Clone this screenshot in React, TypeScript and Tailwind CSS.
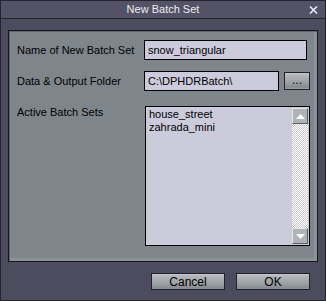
import React from "react";

const font = { fontFamily: '"Liberation Sans", Arial, sans-serif' };

function BevelButton({ children, className = "" }: { children: React.ReactNode; className?: string }) {
  return (
    <button
      className={`flex items-center justify-center border border-[#22212b] bg-[linear-gradient(#c4c8cb_0px,#b4b8bc_2px,#a6abaf_6px,#9a9fa3_10px,#868b90_14px,#9ca1a5_16px)] text-[12px] leading-none text-black ${className}`}
    >
      {children}
    </button>
  );
}

function ScrollArrow({ up }: { up: boolean }) {
  return (
    <div className="flex h-[16px] w-[16px] items-center justify-center border border-t-[#e4e6e8] border-l-[#e4e6e8] border-r-[#5a5f64] border-b-[#5a5f64] bg-[#aeb3b7]">
      <svg width="9" height="5" viewBox="0 0 9 5">
        {up ? <path d="M0 5 L4.5 0 L9 5 Z" fill="#ffffff" /> : <path d="M0 0 L4.5 5 L9 0 Z" fill="#ffffff" />}
      </svg>
    </div>
  );
}

export default function App() {
  return (
    <div className="h-[301px] w-[326px] overflow-hidden" style={font}>
      <div className="flex h-full w-full flex-col border border-[#24232e] bg-[#4d4b5e]">
        {/* title bar */}
        <div className="relative flex h-[18px] shrink-0 items-center justify-center border-b border-[#26252f] bg-[#545266] text-[11px] text-[#ececf4]">
          New Batch Set
          <svg className="absolute right-[7px] top-[5px]" width="9" height="8" viewBox="0 0 9 8">
            <path d="M1 0.5 L8 7.5 M8 0.5 L1 7.5" stroke="#e8e8f0" strokeWidth="1.6" />
          </svg>
        </div>

        <div className="flex flex-1 flex-col px-[7px] pt-[11px]">
          {/* main panel */}
          <div className="h-[232px] border border-[#15151c] bg-[#7e868c] shadow-[inset_1px_1px_0_#5f666c,inset_-3px_-3px_0_#8c9398]">
            <div className="flex flex-col pl-[8px] pr-[8px] pt-[9px] text-[11px] text-black">
              <div className="flex h-[20px] items-center">
                <span className="w-[127px] shrink-0 whitespace-nowrap">Name of New Batch Set</span>
                <div className="flex h-[20px] w-[163px] shrink-0 items-center whitespace-nowrap border border-black bg-[#cccbdc] px-[3px]">
                  snow_triangular
                </div>
              </div>

              <div className="mt-[11px] flex h-[20px] items-center">
                <span className="w-[127px] shrink-0 whitespace-nowrap">Data &amp; Output Folder</span>
                <div className="flex h-[20px] w-[135px] shrink-0 items-center whitespace-nowrap border border-black bg-[#cccbdc] px-[3px]">
                  C:\DPHDRBatch\
                </div>
                <BevelButton className="ml-[5px] h-[18px] w-[26px] shrink-0 !items-end pb-[3px]">...</BevelButton>
              </div>

              <div className="mt-[15px] flex items-start">
                <span className="w-[128px] shrink-0 whitespace-nowrap leading-[12px]">Active Batch Sets</span>
                <div className="flex h-[140px] w-[165px] shrink-0 border border-black bg-[#cccbdc]">
                  <div className="flex-1 pl-[3px] pt-[1px] leading-[13px]">
                    <div>house_street</div>
                    <div>zahrada_mini</div>
                  </div>
                  <div className="mb-[1px] mr-[1px] mt-[1px] flex w-[16px] flex-col justify-between bg-[repeating-conic-gradient(#c8c8cc_0%_25%,#ffffff_0%_50%)] bg-[length:2px_2px]">
                    <ScrollArrow up />
                    <ScrollArrow up={false} />
                  </div>
                </div>
              </div>
            </div>
          </div>

          {/* bottom buttons */}
          <div className="mt-[11px] flex justify-end gap-[11px] pr-[8px] text-[11px]">
            <BevelButton className="h-[17px] w-[74px]">Cancel</BevelButton>
            <BevelButton className="h-[17px] w-[74px]">OK</BevelButton>
          </div>
        </div>
      </div>
    </div>
  );
}
